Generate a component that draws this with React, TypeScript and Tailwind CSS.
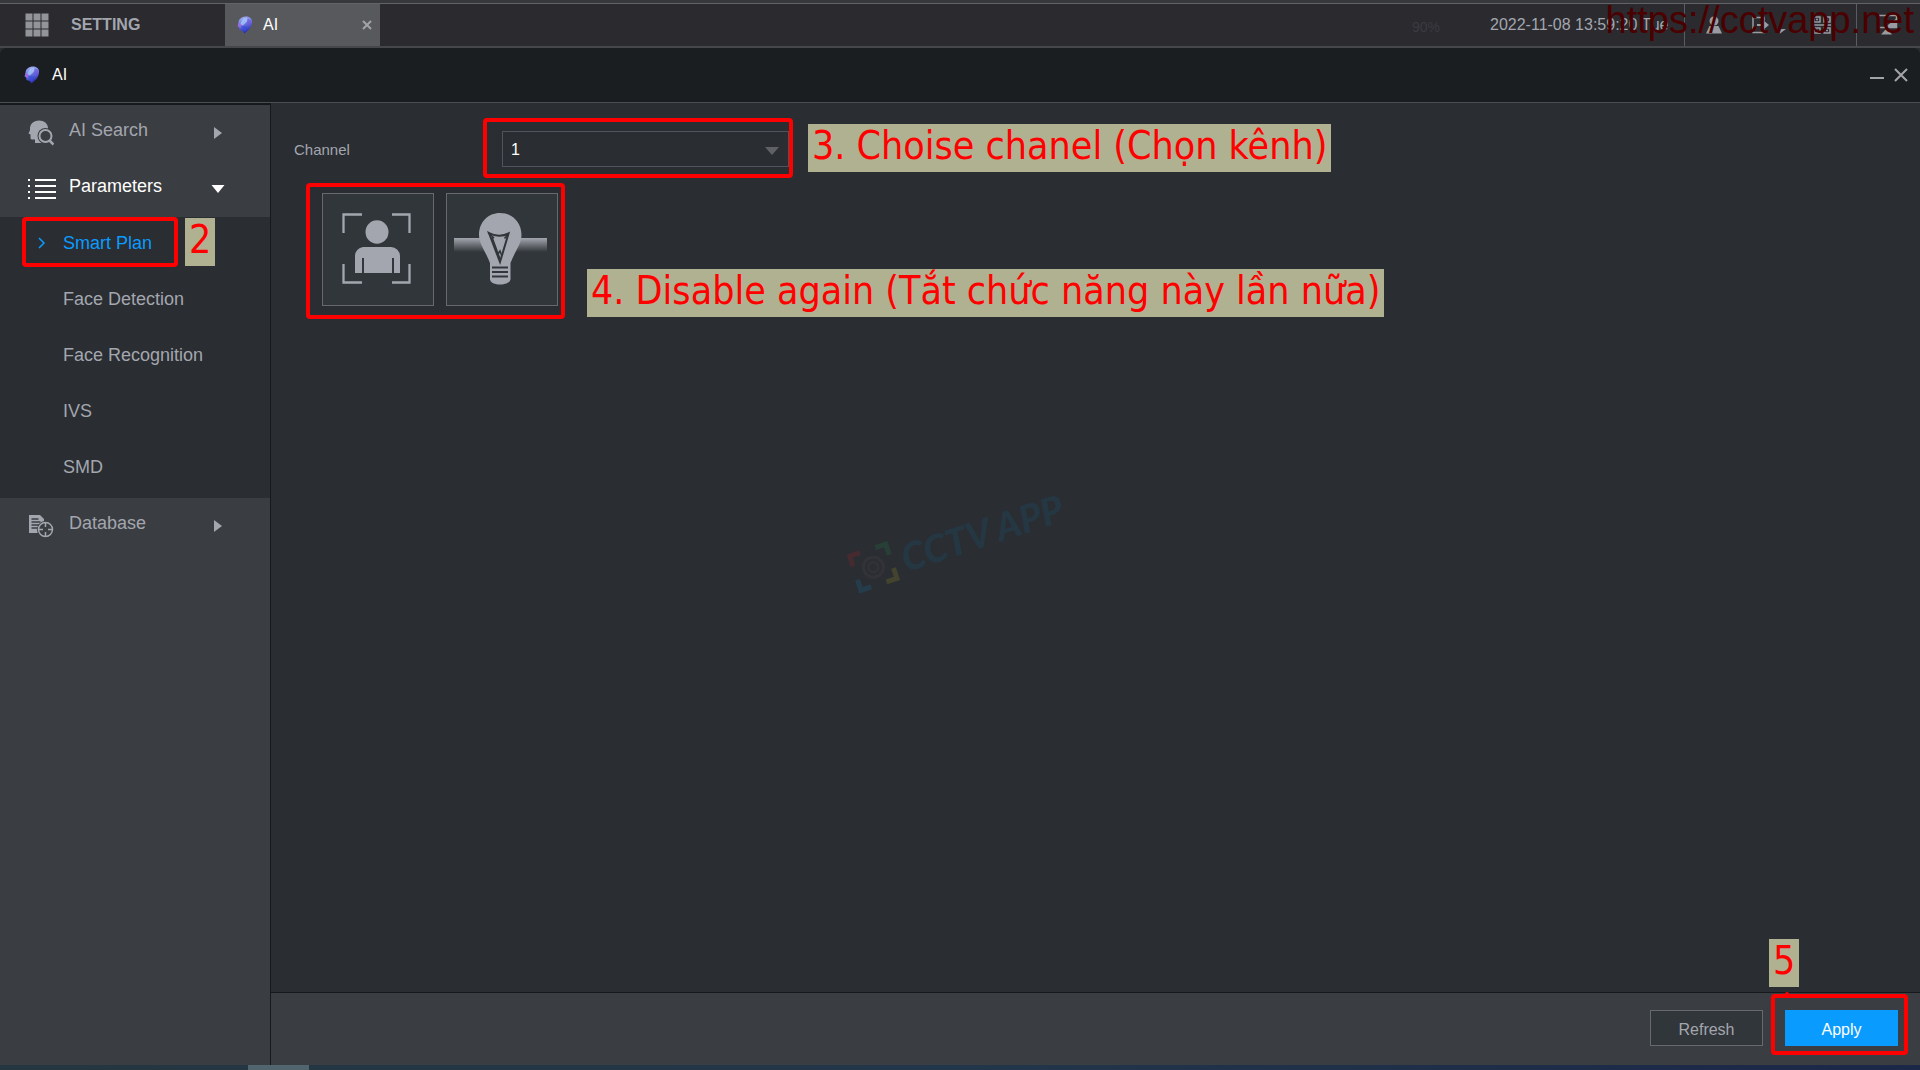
import { useState } from "react";
import type { ReactNode } from "react";

interface MenuRowProps {
  icon: ReactNode;
  label: string;
  open?: boolean;
}

const subMenu = ["Smart Plan", "Face Detection", "Face Recognition", "IVS", "SMD"];

function AiIcon() {
  return (
    <svg width="16" height="18" viewBox="0 0 16 18" aria-hidden="true">
      <defs>
        <linearGradient id="ai" x1="0" y1="0" x2="0.3" y2="1">
          <stop offset="0" stopColor="#b9b4f2" />
          <stop offset="0.45" stopColor="#6f83ea" />
          <stop offset="1" stopColor="#2b2fae" />
        </linearGradient>
      </defs>
      <path d="M8 0.500C12.500 0 15 2.500 15 5.500c0 3.500-1 5-2.500 7.500L7.500 17.500 5.500 15 2.500 14 2 11.500 0.500 10.500 1.500 7C1.800 3 4.500 1 8 0.500Z" fill="url(#ai)" />
      <path d="M6 2.500l4-1 1 3-2 2-3 3-3-1z" fill="#a9d0f7" opacity="0.7" />
      <path d="M10 3l4 1v4l-3 2-1-3z" fill="#7d4fd8" opacity="0.6" />
      <path d="M1.500 7l3 1-1 4-2-1.500z" fill="#b45fe0" opacity="0.8" />
      <path d="M5 10l5 1-2 5-2-3z" fill="#3a4be0" opacity="0.8" />
    </svg>
  );
}

function GridIcon() {
  return (
    <svg width="24" height="24" viewBox="0 0 24 24" fill="#929499" aria-hidden="true">
      {[0, 8, 16].map((y) =>
        [0, 8, 16].map((x) => <rect key={`${x}-${y}`} x={x + 0.5} y={y + 0.5} width="7" height="7" />)
      )}
    </svg>
  );
}

function FaceSearchIcon() {
  return (
    <svg width="26" height="26" viewBox="0 0 26 26" aria-hidden="true">
      <path d="M11 0.500C16 0.500 20 3.500 20 8c0 5-3 7-4 9v6H7v-3.500H4c-1.500 0-1.500-1-1.500-2.500v-2.500L0.500 13.500 2 10C1.500 4 5.500 0.500 11 0.500Z" fill="#a3a6ae" />
      <circle cx="17.500" cy="16" r="8" fill="#3a3d41" />
      <circle cx="17.500" cy="16" r="6" fill="none" stroke="#a3a6ae" strokeWidth="2" />
      <path d="M21.500 20.500l4 4" stroke="#a3a6ae" strokeWidth="2.500" />
    </svg>
  );
}

function ListIcon() {
  return (
    <svg width="28" height="20" viewBox="0 0 28 20" fill="#fff" aria-hidden="true">
      {[0, 6, 12, 18].map((y) => (
        <g key={y}>
          <rect x="0" y={y} width="2" height="2" />
          <rect x="7" y={y} width="21" height="2" />
        </g>
      ))}
    </svg>
  );
}

function DatabaseIcon() {
  return (
    <svg width="26" height="24" viewBox="0 0 26 24" aria-hidden="true">
      <path d="M1 1H12l4 4v14H1Z" fill="#a3a6ae" />
      <path d="M3.500 5h7M3.500 8h9M3.500 11h9M3.500 14h9" stroke="#3a3d41" strokeWidth="1.300" />
      <circle cx="17.500" cy="15.500" r="8.500" fill="#3a3d41" />
      <circle cx="17.500" cy="15.500" r="7" fill="none" stroke="#a3a6ae" strokeWidth="1.500" />
      <path d="M17.500 8v5M17.500 18v5M10 15.500h5M20 15.500h5" stroke="#a3a6ae" strokeWidth="1.500" />
    </svg>
  );
}

function PersonIcon() {
  return (
    <svg width="70" height="72" viewBox="0 0 70 72" aria-hidden="true">
      <path d="M1.500 20V1.500H20M50 1.500h17.500V20M67.500 51v18.500H50M20 69.500H1.500V51" fill="none" stroke="#a3a6ae" strokeWidth="2.300" />
      <ellipse cx="35" cy="19" rx="11.500" ry="11.800" fill="#a3a6ae" />
      <path d="M21 34h28a9 9 0 0 1 9 9V60H52V45H50V60H22V45H20V60H13V43a9 9 0 0 1 8-9Z" fill="#a3a6ae" />
    </svg>
  );
}

function BulbIcon() {
  return (
    <svg width="94" height="72" viewBox="0 0 94 72" aria-hidden="true">
      <defs>
        <linearGradient id="beam" x1="0" y1="0" x2="0" y2="1">
          <stop offset="0" stopColor="#a3a6ae" />
          <stop offset="1" stopColor="#31363a" />
        </linearGradient>
      </defs>
      <rect x="0" y="25" width="93" height="14" fill="url(#beam)" />
      <path d="M46 0C58 0 67.500 9 67.500 22c0 9-6 15-11 28v16c0 3-4 5.500-10.500 5.500S36 69 36 66V50C31 37 25 31 25 22 25 9 34 0 46 0Z" fill="#a3a6ae" />
      <path d="M35 20c6 3.500 14 3.500 19.500 0.500L46 49Z" fill="none" stroke="#31363a" strokeWidth="2" />
      <path d="M34 19.500l6 5.500M54.500 20.500l-4 5M38 24l8 22M44 41l2-3 1.500 4" fill="none" stroke="#31363a" strokeWidth="1.500" />
      <path d="M38 54.500h16M38 59h16M38 63.500h16" stroke="#31363a" strokeWidth="2" />
    </svg>
  );
}

function StatusIcons() {
  return (
    <>
      <div className="flex h-full w-[172px] items-center border-l border-[#5b5c60] pl-5">
        <button aria-label="User">
          <svg width="18" height="18" viewBox="0 0 18 18" fill="#9a9ca1">
            <circle cx="9" cy="5" r="4.500" />
            <path d="M1 17.500l3.500-7.500h9l3.500 7.500z" />
          </svg>
        </button>
        <button aria-label="Log out" className="ml-7">
          <svg width="36" height="18" viewBox="0 0 36 18">
            <path d="M13 5V1.500H2v15h11V13" fill="none" stroke="#9a9ca1" strokeWidth="1.500" />
            <path d="M6 8h6V4l6 5-6 5v-4H6z" fill="#9a9ca1" />
            <path d="M27 13h8l-6 4.500z" fill="#9a9ca1" />
          </svg>
        </button>
        <button aria-label="QR code" className="ml-[26px]">
          <svg width="18" height="18" viewBox="0 0 18 18" fill="none" stroke="#9a9ca1" strokeWidth="1.500">
            <path d="M1 1h6v5H1zM11 1h6v5h-6zM1 12h6v5H1zM11 12h6v5h-6zM0 9h18M3 3.500h2M13 3.500h2M3 14.500h2M13 14.500h2" />
          </svg>
        </button>
      </div>
      <div className="flex h-full w-16 items-center border-l border-[#5b5c60] pl-5">
        <button aria-label="Display">
          <svg width="22" height="22" viewBox="0 0 22 22">
            <path d="M1.500 1.500h18v12h-18z" fill="none" stroke="#9a9ca1" strokeWidth="1.500" />
            <path d="M20 4v10H7z" fill="#9a9ca1" />
            <path d="M10 14l5 6.500H4z" fill="#9a9ca1" />
          </svg>
        </button>
      </div>
    </>
  );
}

function Watermark() {
  return (
    <div className="absolute top-[415px] left-[576px] flex -rotate-18 items-center gap-2 opacity-20" aria-hidden="true">
      <svg width="44" height="44" viewBox="0 0 44 44" fill="none" strokeWidth="5">
        <path d="M3 15V4h11" stroke="#b0202c" />
        <path d="M30 4h11v11" stroke="#1f8a4c" />
        <path d="M41 29v11H30" stroke="#a89a20" />
        <path d="M14 40H3V29" stroke="#1580b0" />
        <circle cx="22" cy="22" r="10" stroke="#5a4a50" strokeWidth="3" />
        <circle cx="22" cy="22" r="5" stroke="#5a4a50" strokeWidth="2" />
      </svg>
      <span className="font-['Lato'] text-[38px] leading-[44px] font-black whitespace-nowrap text-[#0f5f86] italic">CCTV APP</span>
    </div>
  );
}

function Note({ children, className }: { children: ReactNode; className: string }) {
  return (
    <div className={`absolute bg-[#b0b191] px-1 pb-1 font-['DejaVu_Sans_Condensed','DejaVu_Sans',sans-serif] text-[39px] leading-[44px] whitespace-nowrap text-[#ff0000] ${className}`}>
      {children}
    </div>
  );
}

function Frame({ className }: { className: string }) {
  return <div className={`pointer-events-none absolute rounded-sm border-4 border-[#ff0000] ${className}`} />;
}

function MenuRow({ icon, label, open }: MenuRowProps) {
  return (
    <button className={`flex h-14 w-full shrink-0 items-center pl-7 text-left ${open ? "text-white" : "text-[#a3a6ae]"}`}>
      <span className="flex w-[41px] items-center">{icon}</span>
      <span className="w-[142px] pb-1.5">{label}</span>
      <span className="flex w-3.5 justify-center">
        {open ? (
          <svg width="14" height="8" viewBox="0 0 14 8" fill="currentColor"><path d="M0.500 0h13L7 8z" /></svg>
        ) : (
          <svg width="8" height="12" viewBox="0 0 8 12" fill="currentColor"><path d="M0 0l8 6-8 6z" /></svg>
        )}
      </span>
    </button>
  );
}

export default function App() {
  const [active, setActive] = useState("Smart Plan");

  return (
    <div className="flex min-h-screen flex-col bg-[#2a2d32] font-['Liberation_Sans',Arial,sans-serif] text-lg text-[#a3a6ae]">
      <div className="h-[3px] bg-[#37383b]" />
      <header className="relative flex h-[45px] items-center border-t border-b-2 border-t-[#636367] border-b-[#46474b] bg-[#2a2a2f] text-base">
        <div className="flex w-[225px] items-center gap-[22px] pl-[25px]">
          <GridIcon />
          <span className="font-bold">SETTING</span>
        </div>
        <div className="flex h-full w-[155px] items-center bg-[#58595d] pr-2 pl-3 text-white">
          <AiIcon />
          <span className="ml-2.5 flex-1">AI</span>
          <button aria-label="Close tab">
            <svg width="10" height="10" viewBox="0 0 10 10" stroke="#a3a4a7" strokeWidth="2"><path d="M1 1l8 8M9 1l-8 8" /></svg>
          </button>
        </div>
        <div className="flex h-full flex-1 items-center justify-end">
          <span className="mr-[50px] pt-1 text-sm text-[#3b3b40]">90%</span>
          <span className="w-[194px] whitespace-nowrap">2022-11-08 13:59:20 Tue</span>
          <StatusIcons />
        </div>
        <div className="pointer-events-none absolute -top-1.5 right-1.5 text-[38px] leading-[44px] text-[#4a0000]">https://cctvapp.net</div>
      </header>

      <div className="flex h-[55px] items-center rounded-t-md border-b border-[#4a4d52] bg-[#1b1e20] pr-3 pl-6 text-base text-white">
        <AiIcon />
        <h1 className="ml-3 flex-1">AI</h1>
        <button aria-label="Minimize" className="mr-2.5">
          <svg width="14" height="14" viewBox="0 0 14 14" fill="#a3a4a7"><path d="M0 9h14v2H0z" /></svg>
        </button>
        <button aria-label="Close">
          <svg width="14" height="14" viewBox="0 0 14 14" stroke="#a3a4a7" strokeWidth="2"><path d="M1 1l12 12M13 1L1 13" /></svg>
        </button>
      </div>

      <div className="flex flex-1">
        <nav className="flex w-[271px] shrink-0 flex-col border-t-2 border-r border-[#16181b] bg-[#3a3d41]">
          <MenuRow icon={<FaceSearchIcon />} label="AI Search" />
          <MenuRow icon={<ListIcon />} label="Parameters" open />
          <ul className="bg-[#2a2d32] pb-px">
            {subMenu.map((item) => (
              <li key={item} className="relative">
                <button
                  onClick={() => setActive(item)}
                  className={`flex h-14 w-full items-center pb-1 pl-[63px] text-left ${active === item ? "text-[#0a9bff]" : ""}`}
                >
                  {active === item && (
                    <svg className="absolute left-[38px]" width="8" height="12" viewBox="0 0 8 12" fill="none" stroke="currentColor" strokeWidth="1.500"><path d="M1 1l5 5-5 5" /></svg>
                  )}
                  {item}
                </button>
                {item === "Smart Plan" && (
                  <>
                    <Frame className="top-0 left-[22px] h-[50px] w-[156px]" />
                    <Note className="top-px left-[185px]">2</Note>
                  </>
                )}
              </li>
            ))}
          </ul>
          <MenuRow icon={<DatabaseIcon />} label="Database" />
        </nav>

        <div className="flex flex-1 flex-col">
          <main className="relative flex-1 pt-7 pl-[23px]">
            <div className="flex items-center">
              <label htmlFor="channel" className="w-52 pt-0.5 text-[15px]">Channel</label>
              <div className="relative">
                <select id="channel" className="h-9 w-[287px] appearance-none border border-[#50535b] bg-[#2a2d32] pt-px pl-2 text-base text-white">
                  <option>1</option>
                </select>
                <svg className="pointer-events-none absolute top-4 right-2.5" width="14" height="8" viewBox="0 0 14 8" fill="#5f6167"><path d="M0 0h14L7 8z" /></svg>
                <Frame className="-top-[13px] -right-1 -bottom-[11px] -left-[19px]" />
                <Note className="-top-[7px] left-[306px]">3. Choise chanel (Chọn kênh)</Note>
              </div>
            </div>

            <div className="relative mt-[26px] ml-7 flex w-[236px] gap-3">
              <button aria-label="Face" className="flex h-[113px] w-28 items-center justify-center border border-[#666970] bg-[#31363a] pr-0.5 pb-0.5">
                <PersonIcon />
              </button>
              <button aria-label="IVS" className="flex h-[113px] w-28 items-center justify-center border border-[#666970] bg-[#31363a] pr-0.5 pb-0.5">
                <BulbIcon />
              </button>
              <Frame className="-top-2.5 -right-[7px] -bottom-[13px] -left-4" />
              <Note className="top-[76px] left-[265px]">4. Disable again (Tắt chức năng này lần nữa)</Note>
            </div>

            <Watermark />
          </main>

          <footer className="flex h-[73px] items-center justify-end gap-[22px] border-t border-[#16181b] bg-[#3a3d41] pr-[22px] pb-0.5 text-base">
            <button className="h-9 w-[113px] border border-[#66696d] bg-[#31363a] pt-1">Refresh</button>
            <div className="relative flex">
              <button className="h-9 w-[113px] bg-[#0a9bff] pt-1 text-white">Apply</button>
              <Frame className="-top-4 -right-2.5 -bottom-[9px] -left-3.5" />
              <div className="absolute -top-[18px] left-0 h-1 w-1 rounded-t-sm bg-[#ff0000]" />
              <Note className="-top-[71px] -left-4">5</Note>
            </div>
          </footer>
        </div>
      </div>

      <div className="h-[5px] bg-linear-to-r from-[#24363f] via-[#22364a] to-[#1b2747]">
        <div className="ml-[248px] h-full w-[61px] bg-[#50656e]" />
      </div>
    </div>
  );
}
